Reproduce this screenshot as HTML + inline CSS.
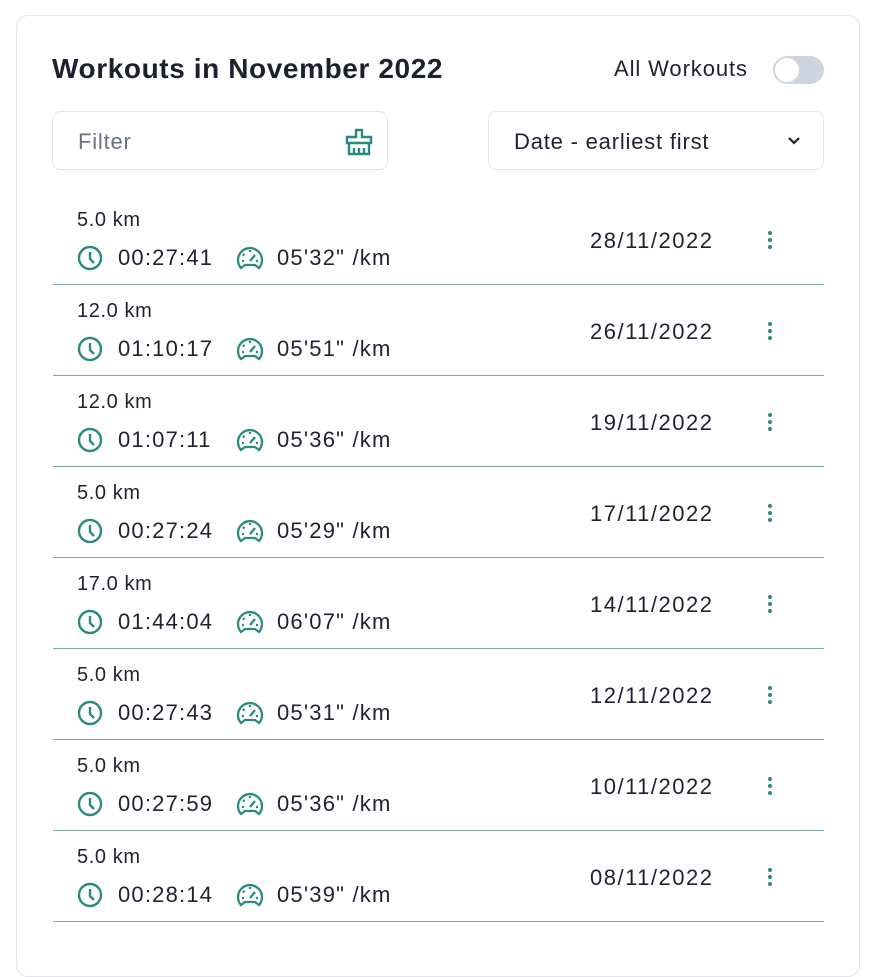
<!DOCTYPE html>
<html><head><meta charset="utf-8"><style>
html,body{margin:0;background:#fff;width:884px;height:936px;overflow:hidden;font-family:"Liberation Sans",sans-serif;color:#1e2230}
.card{position:absolute;left:16px;top:15px;width:842px;height:960px;border:1px solid #e2e5ea;border-radius:12px;background:#fff}
h1{position:absolute;left:52px;top:53px;margin:0;font-size:28px;font-weight:bold;color:#1c2130;letter-spacing:0.6px}
.aw{position:absolute;left:614px;top:56px;font-size:22px;letter-spacing:0.9px;color:#1e2230}
.tog{position:absolute;left:773px;top:56px;width:51px;height:28px;border-radius:14px;background:#cdd5e1}
.tog:after{content:"";position:absolute;left:2px;top:2px;width:24px;height:24px;border-radius:50%;background:#fff}
.box{position:absolute;top:111px;height:59px;border:1px solid #e2e5ea;border-radius:8px;box-sizing:border-box;font-size:22px;letter-spacing:0.8px}
.f{left:52px;width:336px;color:#6b7280}
.s{left:488px;width:336px;color:#1e2230}
.row{position:absolute;left:53px;width:771px;height:91px;border-bottom:1px solid #7fa9a4;box-sizing:border-box}
.km{position:absolute;left:24px;top:15px;font-size:20px;letter-spacing:0.6px}
.st{position:absolute;left:24px;top:51px;font-size:22px;letter-spacing:1.2px;display:flex;align-items:center;white-space:nowrap}
.dt{position:absolute;left:537px;top:34px;font-size:22px;letter-spacing:1.5px}
.dots{position:absolute;left:715px;top:37px}
.dots i{display:block;width:4px;height:4px;border-radius:50%;background:#2a8a80;margin-bottom:3px}
svg{flex:none}
</style></head><body>
<div class="card"></div>
<h1>Workouts in November 2022</h1>
<div class="aw">All Workouts</div><div class="tog"></div>
<div class="box f"><span style="position:absolute;left:25px;top:17px">Filter</span>
<svg style="position:absolute;left:292px;top:16px" width="28" height="28" viewBox="0 0 28 28" fill="none" stroke="#2a8a80" stroke-width="2.4"><path d="M11 2h6v7h9v6H2V9h9z"/><path d="M4 15v11h20V15M9 20v6M14 20v6M19 20v6"/></svg></div>
<div class="box s"><span style="position:absolute;left:25px;top:17px">Date - earliest first</span>
<svg style="position:absolute;left:298px;top:24px" width="14" height="10" viewBox="0 0 14 10" fill="none" stroke="#1e2230" stroke-width="2.2"><path d="M2 2l5 5 5-5"/></svg></div>
<div id="rows"></div>
<script>
var d=[["5.0","00:27:41","05'32\"","28/11/2022"],["12.0","01:10:17","05'51\"","26/11/2022"],["12.0","01:07:11","05'36\"","19/11/2022"],["5.0","00:27:24","05'29\"","17/11/2022"],["17.0","01:44:04","06'07\"","14/11/2022"],["5.0","00:27:43","05'31\"","12/11/2022"],["5.0","00:27:59","05'36\"","10/11/2022"],["5.0","00:28:14","05'39\"","08/11/2022"]];
var clock='<svg width="26" height="26" viewBox="0 0 26 26" fill="none" stroke="#2a8a80" stroke-width="2.4"><circle cx="13" cy="13" r="11"/><path d="M13 7v7l4 4"/></svg>';
var gauge='<svg width="28" height="26" viewBox="0 0 28 26" fill="none" stroke="#2a8a80" stroke-width="2.3"><path d="M5 23A12 12 0 1 1 23 23l-4-3H9z"/><path d="M14 16l5-6M14 5v2M7 9l1.5 1.5M6 16h2M20 16h2"/></svg>';
var h='';d.forEach(function(r,i){h+='<div class="row" style="top:'+(194+i*91)+'px"><div class="km">'+r[0]+' km</div><div class="st">'+clock+'<span style="margin-left:15px;width:118px">'+r[1]+'</span>'+gauge+'<span style="margin-left:13px">'+r[2]+' /km</span></div><div class="dt">'+r[3]+'</div><div class="dots"><i></i><i></i><i></i></div></div>'});
document.getElementById('rows').innerHTML=h;
</script>
</body></html>
